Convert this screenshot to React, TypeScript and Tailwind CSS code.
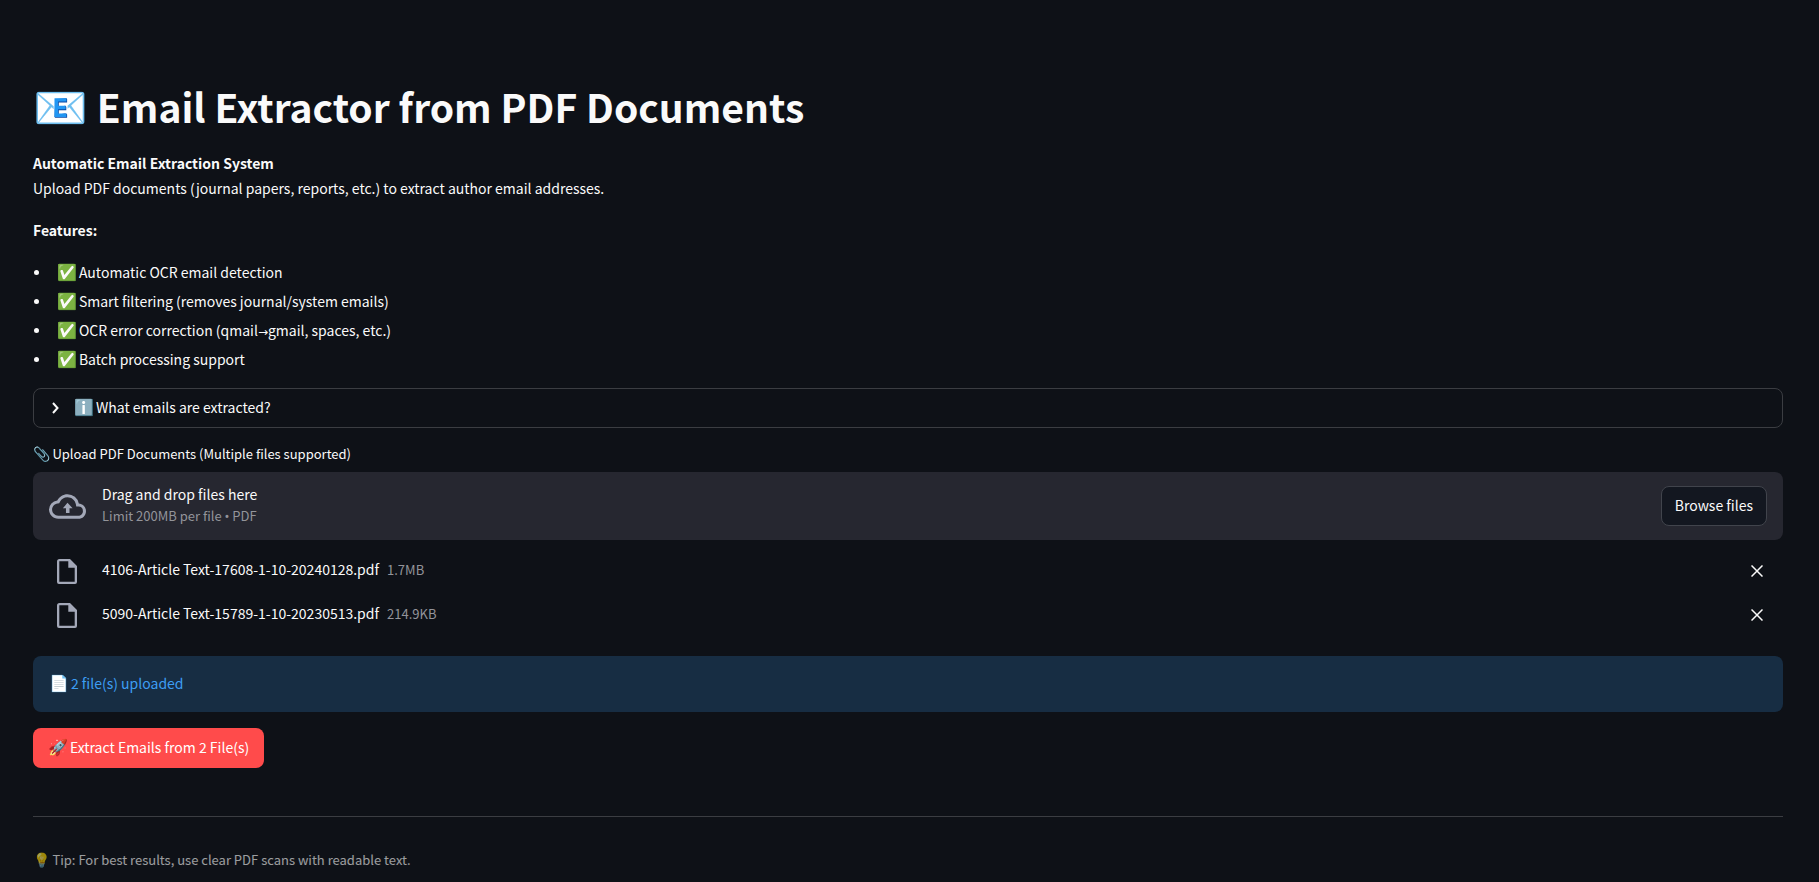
import { useState } from "react";
import type { ReactNode } from "react";

const features: ReactNode[] = [
  "Automatic OCR email detection",
  "Smart filtering (removes journal/system emails)",
  <>
    OCR error correction (qmail<span className="font-['DejaVu_Sans'] text-xs leading-none">→</span>gmail, spaces, etc.)
  </>,
  "Batch processing support",
];

const initialFiles = [
  { name: "4106-Article Text-17608-1-10-20240128.pdf", size: "1.7MB" },
  { name: "5090-Article Text-15789-1-10-20230513.pdf", size: "214.9KB" },
];

function Emoji({ children }: { children: ReactNode }) {
  return <span className="mr-0.5 font-['Noto_Color_Emoji'] text-base leading-none">{children}</span>;
}

function SmallEmoji({ children }: { children: ReactNode }) {
  return <span className="mr-0.5 font-['Noto_Color_Emoji'] text-sm leading-none">{children}</span>;
}

function CloudIcon() {
  return (
    <svg viewBox="0 0 24 24" className="size-[37px] shrink-0 fill-[#a3a8b8]" aria-hidden="true">
      <path d="M19.35 10.04A7.49 7.49 0 0 0 12 4C9.11 4 6.6 5.64 5.35 8.04A5.994 5.994 0 0 0 0 14c0 3.31 2.69 6 6 6h13c2.76 0 5-2.24 5-5 0-2.64-2.05-4.78-4.65-4.96zM19 18H6c-2.21 0-4-1.79-4-4 0-2.05 1.53-3.76 3.56-3.97l1.07-.11.5-.95A5.469 5.469 0 0 1 12 6c2.62 0 4.88 1.86 5.39 4.43l.3 1.5 1.53.11A2.98 2.98 0 0 1 22 15c0 1.65-1.35 3-3 3zM9 13.200h2v3h2.300v-3h2L12 9.500z" />
    </svg>
  );
}

function FileIcon() {
  return (
    <svg viewBox="0 0 20 25" className="h-[25px] w-5 fill-[#a3a8b8]" aria-hidden="true">
      <path fillRule="evenodd" d="M2.500 0H13l7 7v16a2 2 0 0 1-2 2h-16A2 2 0 0 1 0 23v-20.500A2.500 2.500 0 0 1 2.500 0zM2.300 2.300v20.400h15.400V8.700H11.300V2.300z" />
    </svg>
  );
}

export default function App() {
  const [files, setFiles] = useState(initialFiles);

  return (
    <main className="min-h-screen bg-[#0e1117] pt-20 pr-9 pl-[33px] font-['Noto_Sans_CJK_SC',sans-serif] text-sm text-[#fafafa]">
      <h1 className="text-[39px] leading-[53px] font-bold">
        <span className="mr-[9px] font-['Noto_Color_Emoji'] text-[44px] leading-none">📧</span>
        Email Extractor from PDF Documents
      </h1>

      <section className="mt-[18px] leading-[25px]">
        <p>
          <strong>Automatic Email Extraction System</strong>
          <br />
          Upload PDF documents (journal papers, reports, etc.) to extract author email addresses.
        </p>
        <p className="mt-[17px]">
          <strong>Features:</strong>
        </p>
        <ul className="mt-[15px] leading-[29px]">
          {features.map((feature, index) => (
            <li key={index} className="flex h-[29px] items-center">
              <span className="mr-[18px] ml-px size-[5px] rounded-full bg-[#fafafa]" />
              <span>
                <Emoji>✅</Emoji>
                {feature}
              </span>
            </li>
          ))}
        </ul>
      </section>

      <details className="mt-[14px] rounded-lg border border-[#3b3d42]">
        <summary className="flex h-[38px] cursor-pointer list-none items-center px-4">
          <svg viewBox="0 0 24 24" className="mr-3 size-3 fill-none stroke-current stroke-[4]" aria-hidden="true">
            <path d="M6 2l9 10-9 10" />
          </svg>
          <span className="pb-0.5">
            <Emoji>ℹ️</Emoji>
            What emails are extracted?
          </span>
        </summary>
        <p className="px-4 pb-4">Author and corresponding author email addresses.</p>
      </details>

      <label htmlFor="browse" className="mt-4 block h-5 text-[13px] leading-5">
        <SmallEmoji>📎</SmallEmoji>
        Upload PDF Documents (Multiple files supported)
      </label>

      <section className="mt-2 flex h-[68px] items-center rounded-lg bg-[#262730] px-4">
        <CloudIcon />
        <div className="ml-4 flex-1 pb-1">
          <p className="leading-6">Drag and drop files here</p>
          <p className="text-[13px] leading-5 text-[#93949a]">
            Limit 200MB per file <span className="font-['Noto_Sans']">•</span> PDF
          </p>
        </div>
        <button id="browse" type="button" className="h-10 rounded-lg border border-[#41444c] bg-[#131720] px-[13px] pb-0.5">
          Browse files
        </button>
      </section>

      <ul className="mt-[9px] px-4">
        {files.map((file) => (
          <li key={file.name} className="flex h-11 items-center">
            <span className="mr-[25px] ml-2">
              <FileIcon />
            </span>
            <span className="pb-1">{file.name}</span>
            <span className="ml-2 flex-1 pb-0.5 text-[13px] text-[#93949a]">{file.size}</span>
            <button
              type="button"
              aria-label={`Remove ${file.name}`}
              className="p-1"
              onClick={() => setFiles(files.filter((other) => other !== file))}
            >
              <svg viewBox="0 0 12 12" className="size-3 fill-none stroke-current stroke-[1.5]" aria-hidden="true">
                <path d="M.5.5l11 11M11.5.5l-11 11" />
              </svg>
            </button>
          </li>
        ))}
      </ul>

      <div role="status" className="mt-[19px] flex h-14 items-center rounded-lg bg-[#172d43] px-4 text-[#3d9df3]">
        <span className="pb-0.5">
          <Emoji>📄</Emoji>
          {files.length} file(s) uploaded
        </span>
      </div>

      <button type="button" className="mt-4 flex h-10 items-center rounded-lg bg-[#ff4b4b] px-[15px] text-white">
        <span className="pb-0.5">
          <Emoji>🚀</Emoji>
          Extract Emails from {files.length} File(s)
        </span>
      </button>

      <hr className="mt-12 border-[#3b3d42]" />

      <p className="mt-[31px] h-6 text-[13px] leading-6 text-[#fafafa] opacity-60">
        <SmallEmoji>💡</SmallEmoji>
        Tip: For best results, use clear PDF scans with readable text.
      </p>
    </main>
  );
}
